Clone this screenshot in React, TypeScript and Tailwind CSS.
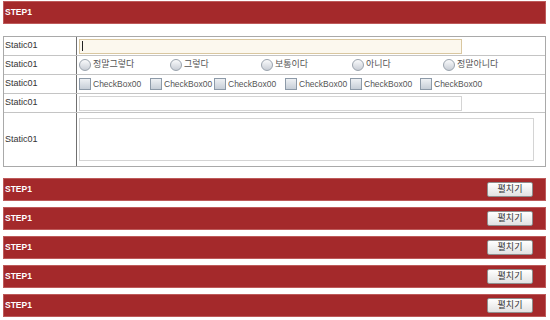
const radios = ["정말그렇다", "그렇다", "보통이다", "아니다", "정말아니다"];
const checkWidths = ["w-[71px]", "w-[64px]", "w-[71px]", "w-[65px]", "w-[70px]", "w-[70px]"];

function Bar({ button }: { button?: boolean }) {
  return (
    <div className="h-[23px] bg-[#a4292b] border border-[#bd5a5a] flex items-center justify-between pl-px pr-[12px]">
      <span className="text-white font-bold text-[8.5px]">STEP1</span>
      {button && (
        <button className="w-[46px] h-[15px] rounded-[2px] border border-[#8f8f8f] bg-gradient-to-b from-white to-[#e2e2e2] text-[9px] leading-none text-[#333] flex items-center justify-center">
          펼치기
        </button>
      )}
    </div>
  );
}

function Radio({ label }: { label: string }) {
  return (
    <div className="w-[91px] flex items-center gap-[2px]">
      <span className="w-[12px] h-[12px] rounded-full border border-[#9aa3ad] bg-gradient-to-b from-[#fafbfc] to-[#c9ced6]" />
      <span className="text-[9px] text-[#555]">{label}</span>
    </div>
  );
}

function Check({ w }: { w: string }) {
  return (
    <div className={`${w} flex items-center gap-[2px]`}>
      <span className="w-[12px] h-[12px] border border-[#8d9aa8] bg-gradient-to-b from-[#eef1f4] to-[#c6ced7]" />
      <span className="text-[8.5px] text-[#555]">CheckBox00</span>
    </div>
  );
}

function Row({ h, children, last }: { h: string; children: React.ReactNode; last?: boolean }) {
  return (
    <div className={`grid grid-cols-[73px_1fr] ${h} ${last ? "" : "border-b border-[#c4c4c4]"}`}>
      <div className="border-r border-[#707070] flex items-center pl-px text-[9px] text-[#333]">Static01</div>
      <div className="flex items-center pl-[2px]">{children}</div>
    </div>
  );
}

export default function App() {
  return (
    <div className="w-[550px] h-[320px] bg-white pt-px px-[3px] overflow-hidden" style={{ fontFamily: '"Liberation Sans", "Noto Sans CJK KR", sans-serif' }}>
      <div className="w-[543px]">
        <Bar />
        <div className="mt-[12px] border border-[#a9a9a9]">
          <Row h="h-[19px]">
            <div className="w-[383px] h-[15px] border border-[#d9c7a0] bg-[#fcf8ee] flex items-center pl-[2px]">
              <span className="w-px h-[10px] bg-[#222]" />
            </div>
          </Row>
          <Row h="h-[19px]">
            <div className="flex">
              {radios.map((r) => (
                <Radio key={r} label={r} />
              ))}
            </div>
          </Row>
          <Row h="h-[19px]">
            <div className="flex">
              {checkWidths.map((w, i) => (
                <Check key={i} w={w} />
              ))}
            </div>
          </Row>
          <Row h="h-[19px]">
            <div className="w-[383px] h-[15px] border border-[#d4d4d4] bg-white" />
          </Row>
          <Row h="h-[53px]" last>
            <div className="w-[455px] h-[43px] border border-[#d4d4d4] bg-white" />
          </Row>
        </div>
        <div className="mt-[11px] flex flex-col gap-[6px]">
          <Bar button />
          <Bar button />
          <Bar button />
          <Bar button />
          <Bar button />
        </div>
      </div>
    </div>
  );
}
